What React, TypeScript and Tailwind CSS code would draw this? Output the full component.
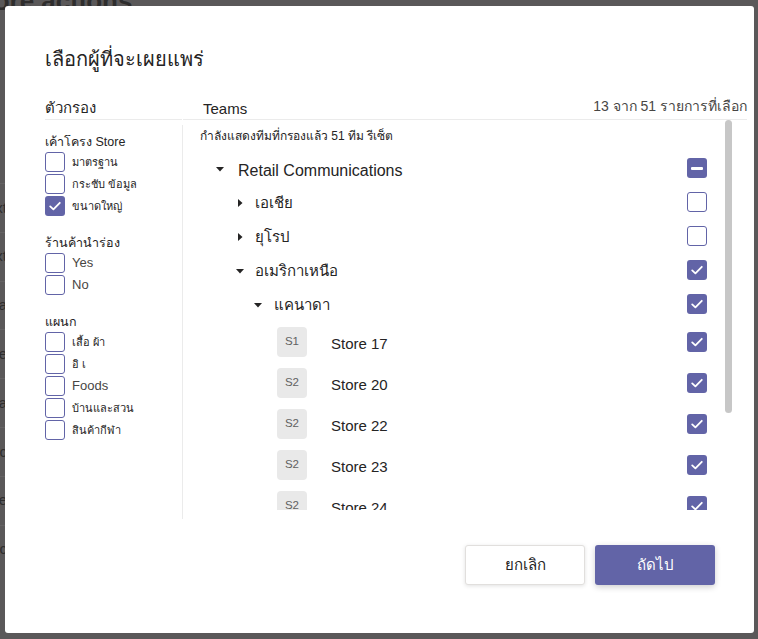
import React from "react";

const Check = () => (
  <svg width="20" height="20" viewBox="0 0 20 20" fill="none">
    <path d="M5.2 10.4 L8.4 13.4 L14.8 6.8" stroke="white" strokeWidth="1.8" strokeLinecap="round" strokeLinejoin="round" />
  </svg>
);

function Box({ state }: { state: "on" | "off" | "mixed" }) {
  if (state === "on")
    return (
      <div className="w-[20px] h-[20px] rounded-[3px] bg-[#6264a7] flex items-center justify-center shrink-0">
        <Check />
      </div>
    );
  if (state === "mixed")
    return (
      <div className="w-[20px] h-[20px] rounded-[3px] bg-[#6264a7] flex items-center justify-center shrink-0">
        <div className="w-[12px] h-[3px] rounded-[1px] bg-white" />
      </div>
    );
  return <div className="w-[20px] h-[20px] rounded-[3px] border border-[#6264a7] bg-white shrink-0" />;
}

const CaretDown = () => (
  <svg width="8" height="5" viewBox="0 0 8 5"><path d="M0 0 L8 0 L4 4.5 Z" fill="#252424" /></svg>
);
const CaretRight = () => (
  <svg width="5" height="8" viewBox="0 0 5 8"><path d="M0 0 L4.5 4 L0 8 Z" fill="#252424" /></svg>
);

function FilterRow({ label, on, en }: { label: string; on?: boolean; en?: boolean }) {
  return (
    <div className="h-[22px] flex items-start">
      <Box state={on ? "on" : "off"} />
      <span
        className={
          en
            ? "ml-[7px] h-[20px] leading-[20px] text-[13px] text-[#484644]"
            : "ml-[7px] h-[20px] leading-[20px] text-[11px] text-[#252424]"
        }
      >
        {label}
      </span>
    </div>
  );
}

function Section({ title, children, first }: { title: string; children: React.ReactNode; first?: boolean }) {
  return (
    <div className={first ? "" : "mt-[15px]"}>
      <div className="h-[20px] leading-[20px] text-[12.5px] text-[#252424]">{title}</div>
      {children}
    </div>
  );
}

function TreeRow({
  pad,
  gap,
  open,
  label,
  state,
  big,
}: {
  pad: string;
  gap: string;
  open: boolean;
  label: string;
  state: "on" | "off" | "mixed";
  big?: boolean;
}) {
  return (
    <div className={`h-[34px] flex items-center pr-[18px] ${pad}`}>
      <div className={`w-[16px] flex items-center justify-center ${big ? "mt-[3px]" : "mt-[2px]"}`}>
        {open ? <CaretDown /> : <CaretRight />}
      </div>
      <span className={`${gap} ${big ? "text-[16px] mt-[5px]" : "text-[15px] mt-[3px]"} text-[#252424] flex-1`}>{label}</span>
      <Box state={state} />
    </div>
  );
}

function StoreRow({ code, name }: { code: string; name: string }) {
  return (
    <div className="h-[41px] flex items-center pl-[94px] pr-[18px]">
      <div className="w-[30px] h-[30px] rounded-[4px] bg-[#e9e9e9] flex items-center justify-center text-[11.5px] text-[#616161]">
        {code}
      </div>
      <span className="ml-[24px] mt-[5px] text-[15px] text-[#252424] flex-1">{name}</span>
      <Box state="on" />
    </div>
  );
}

export default function App() {
  const bgRows = ["xt", "xt", "xa", "xe", "xa", "xc", "xe", "xc"];
  return (
    <div className="relative w-[758px] h-[639px] overflow-hidden bg-[#5a5859] font-['Segoe_UI','Liberation_Sans','Noto_Sans',sans-serif]">
      {/* background page (dimmed) */}
      <div className="absolute left-[-28px] top-[-18px] text-[26px] font-bold text-[#2e2d2d] whitespace-nowrap">
        More actions
      </div>
      <div className="absolute left-0 top-[183px] w-[5px] flex flex-col">
        {bgRows.map((t, i) => (
          <div key={i} className="h-[48.8px] border-t border-[#646263] flex items-center justify-end overflow-hidden">
            <span className="text-[15px] text-[#2e2d2d] whitespace-nowrap mr-[-2px]">{t}</span>
          </div>
        ))}
      </div>

      {/* dialog */}
      <div className="absolute left-[5px] top-[6px] w-[749px] h-[627px] rounded-[3px] bg-white pl-[40px] pr-[7px] pt-[39px] flex flex-col">
        <div className="h-[28px] leading-[28px] text-[20px] text-[#252424]">เลือกผู้ที่จะเผยแพร่</div>

        <div className="mt-[20px] flex">
          {/* left column */}
          <div className="w-[138px] shrink-0">
            <div className="w-[137px] h-[27px] border-b border-[#ebebeb] pt-[5px]">
              <span className="block leading-[20px] text-[15px] text-[#252424]">ตัวกรอง</span>
            </div>
            <div className="mt-[5px] h-[394px] border-r border-[#ebebeb] pt-[7px]">
              <Section title="เค้าโครง Store" first>
                <FilterRow label="มาตรฐาน" />
                <FilterRow label="กระชับ ข้อมูล" />
                <FilterRow label="ขนาดใหญ่" on />
              </Section>
              <Section title="ร้านค้านำร่อง">
                <FilterRow label="Yes" en />
                <FilterRow label="No" en />
              </Section>
              <Section title="แผนก">
                <FilterRow label="เสื้อ ผ้า" />
                <FilterRow label="อิ เ" />
                <FilterRow label="Foods" en />
                <FilterRow label="บ้านและสวน" />
                <FilterRow label="สินค้ากีฬา" />
              </Section>
            </div>
          </div>

          {/* right column */}
          <div className="flex-1 min-w-0">
            <div className="h-[27px] border-b border-[#ebebeb] flex justify-between pl-[20px]">
              <span className="pt-[6px] leading-[20px] text-[15px] text-[#252424]">Teams</span>
              <span className="pt-[3px] leading-[20px] text-[14px] text-[#484644]">13 จาก 51 รายการที่เลือก</span>
            </div>
            <div className="flex h-[390px]">
              <div className="w-[542px] h-[390px] overflow-hidden">
                <div className="mt-[6px] h-[20px] leading-[20px] pl-[17px] text-[12px] text-[#252424]">
                  กำลังแสดงทีมที่กรองแล้ว 51 ทีม รีเซ็ต
                </div>
                <div className="mt-[5px]">
                  <TreeRow pad="pl-[29px]" gap="ml-[10px]" open label="Retail Communications" state="mixed" big />
                  <TreeRow pad="pl-[49px]" gap="ml-[7px]" open={false} label="เอเชีย" state="off" />
                  <TreeRow pad="pl-[49px]" gap="ml-[7px]" open={false} label="ยุโรป" state="off" />
                  <TreeRow pad="pl-[49px]" gap="ml-[7px]" open label="อเมริกาเหนือ" state="on" />
                  <TreeRow pad="pl-[67px]" gap="ml-[8px]" open label="แคนาดา" state="on" />
                  <StoreRow code="S1" name="Store 17" />
                  <StoreRow code="S2" name="Store 20" />
                  <StoreRow code="S2" name="Store 22" />
                  <StoreRow code="S2" name="Store 23" />
                  <StoreRow code="S2" name="Store 24" />
                </div>
              </div>
              <div className="w-[7px]">
                <div className="h-[293px] w-[7px] rounded-full bg-[#c7c7c7]" />
              </div>
            </div>
          </div>
        </div>

        <div className="mt-[26px] mr-[32px] flex justify-end gap-[10px]">
          <button className="w-[120px] h-[40px] rounded-[3px] border border-[#e1dfdd] bg-white text-[15px] text-[#252424] shadow-[0_1px_4px_rgba(0,0,0,0.12)]">
            ยกเลิก
          </button>
          <button className="w-[120px] h-[40px] rounded-[3px] bg-[#6264a7] text-[15px] text-white shadow-[0_2px_6px_rgba(0,0,0,0.2)]">
            ถัดไป
          </button>
        </div>
      </div>
    </div>
  );
}
